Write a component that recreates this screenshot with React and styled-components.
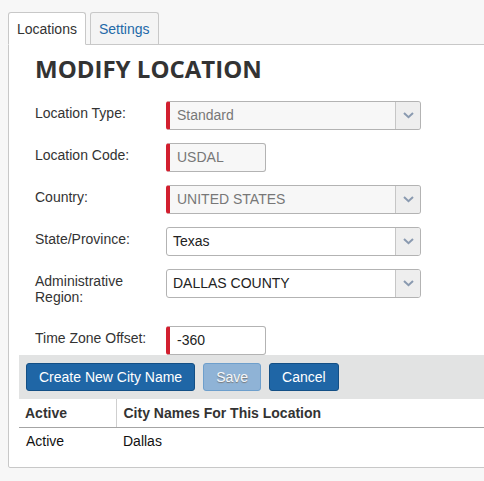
import styled, { createGlobalStyle, css } from "styled-components";

const GlobalStyle = createGlobalStyle`
  html, body {
    margin: 0;
    padding: 0;
    background: #f7f7f7;
    overflow: hidden;
  }
  body {
    font-family: "Liberation Sans", Arial, sans-serif;
    font-size: 14px;
    color: #333;
  }
  *, *::before, *::after {
    box-sizing: border-box;
  }
`;

const Page = styled.div`
  padding: 12px 0 0 8px;
  width: 640px;
`;

const TabBar = styled.ul`
  display: flex;
  align-items: flex-start;
  gap: 4px;
  margin: 0;
  padding: 0;
  list-style: none;
  position: relative;
  z-index: 1;
`;

const Tab = styled.li`
  display: flex;
  align-items: center;
  padding: 0 8px;
  border: 1px solid #c8c8c8;
  border-radius: 3px 3px 0 0;
  font-size: 14px;
  cursor: pointer;

  ${(props) =>
    props.$active
      ? css`
          background: #fff;
          color: #333;
          border-bottom-color: #fff;
          margin-bottom: -1px;
          height: 33px;
        `
      : css`
          background: #f4f4f4;
          color: #2369a8;
          height: 32px;
          border-bottom: none;
        `}
`;

const Panel = styled.div`
  background: #fff;
  border: 1px solid #c8c8c8;
  border-radius: 0 0 2px 2px;
  padding: 0 0 12px 10px;
`;

const FormArea = styled.div`
  height: 310px;
  overflow: hidden;
  padding-left: 16px;
`;

const Title = styled.h1`
  margin: 10px 0 17px;
  font-family: "Open Sans", sans-serif;
  font-weight: 700;
  font-size: 24px;
  line-height: 28.8px;
  color: #333;
`;

const FieldRow = styled.div`
  display: grid;
  grid-template-columns: 131px auto;
  align-items: start;
  margin-bottom: 13px;
`;

const Label = styled.label`
  padding: 4px 0 8px;
  line-height: 16px;
  font-size: 14px;
  color: #333;
  max-width: 122px;
`;

const FieldBox = styled.div`
  display: flex;
  align-items: stretch;
  height: 29px;
  width: ${(props) => props.$width}px;
  border: 1px solid #b3b3b3;
  border-radius: 3px;
  background: ${(props) => (props.$disabled ? "#f7f7f7" : "#fff")};
  color: ${(props) => (props.$disabled ? "#777" : "#222")};
  overflow: hidden;

  ${(props) =>
    props.$required &&
    css`
      border-left: 4px solid #d21f2f;
    `}
`;

const FieldValue = styled.span`
  flex: 1;
  display: flex;
  align-items: center;
  padding-left: ${(props) => (props.$required ? 7 : 6)}px;
  font-size: 14px;
  white-space: nowrap;
`;

const Caret = styled.span`
  width: 25px;
  display: flex;
  align-items: center;
  justify-content: center;
  background: #eee;
  border-left: 1px solid #c6c6c6;
`;

const Toolbar = styled.div`
  display: flex;
  gap: 8px;
  padding: 8px 7px;
  background: #e2e3e3;
`;

const Button = styled.button`
  height: 28px;
  padding: 0 12px;
  font-family: "Liberation Sans", Arial, sans-serif;
  font-size: 14px;
  border-radius: 3px;
  border: 1px solid #134f85;
  background: #1f66a6;
  color: #fff;
  cursor: pointer;

  &:disabled {
    background: #8fb3d6;
    border-color: #6e9fcc;
    color: #f4f7fa;
    text-shadow: 0 1px 1px #777;
    cursor: default;
  }
`;

const Table = styled.table`
  width: 100%;
  border-collapse: collapse;
`;

const HeadCell = styled.th`
  text-align: left;
  font-weight: 700;
  font-size: 14px;
  color: #333;
  height: 28px;
  padding: 0 6px;
  border-bottom: 1px solid #a4a4a4;

  & + & {
    border-left: 1px solid #cfcfcf;
    padding-left: 7px;
  }
`;

const Cell = styled.td`
  font-size: 14px;
  color: #111;
  height: 28px;
  padding: 0 7px;
`;

function Chevron() {
  return (
    <svg width="11" height="7" viewBox="0 0 11 7">
      <path
        d="M1 1l4.5 4.2L10 1"
        fill="none"
        stroke="#8a9ab0"
        strokeWidth="2"
      />
    </svg>
  );
}

function Field({ label, value, width = 255, select, required, disabled }) {
  return (
    <FieldRow>
      <Label>{label}</Label>
      <FieldBox $width={width} $required={required} $disabled={disabled}>
        <FieldValue $required={required}>{value}</FieldValue>
        {select && (
          <Caret>
            <Chevron />
          </Caret>
        )}
      </FieldBox>
    </FieldRow>
  );
}

export default function App() {
  return (
    <>
      <GlobalStyle />
      <Page>
        <TabBar>
          <Tab $active>Locations</Tab>
          <Tab>Settings</Tab>
        </TabBar>
        <Panel>
          <FormArea>
            <Title>MODIFY LOCATION</Title>
            <Field label="Location Type:" value="Standard" select required disabled />
            <Field label="Location Code:" value="USDAL" width={100} required disabled />
            <Field label="Country:" value="UNITED STATES" select required disabled />
            <Field label="State/Province:" value="Texas" select />
            <Field label="Administrative Region:" value="DALLAS COUNTY" select />
            <Field label="Time Zone Offset:" value="-360" width={100} required />
          </FormArea>
          <Toolbar>
            <Button>Create New City Name</Button>
            <Button disabled>Save</Button>
            <Button>Cancel</Button>
          </Toolbar>
          <Table>
            <thead>
              <tr>
                <HeadCell style={{ width: 97 }}>Active</HeadCell>
                <HeadCell>City Names For This Location</HeadCell>
              </tr>
            </thead>
            <tbody>
              <tr>
                <Cell>Active</Cell>
                <Cell>Dallas</Cell>
              </tr>
            </tbody>
          </Table>
        </Panel>
      </Page>
    </>
  );
}
